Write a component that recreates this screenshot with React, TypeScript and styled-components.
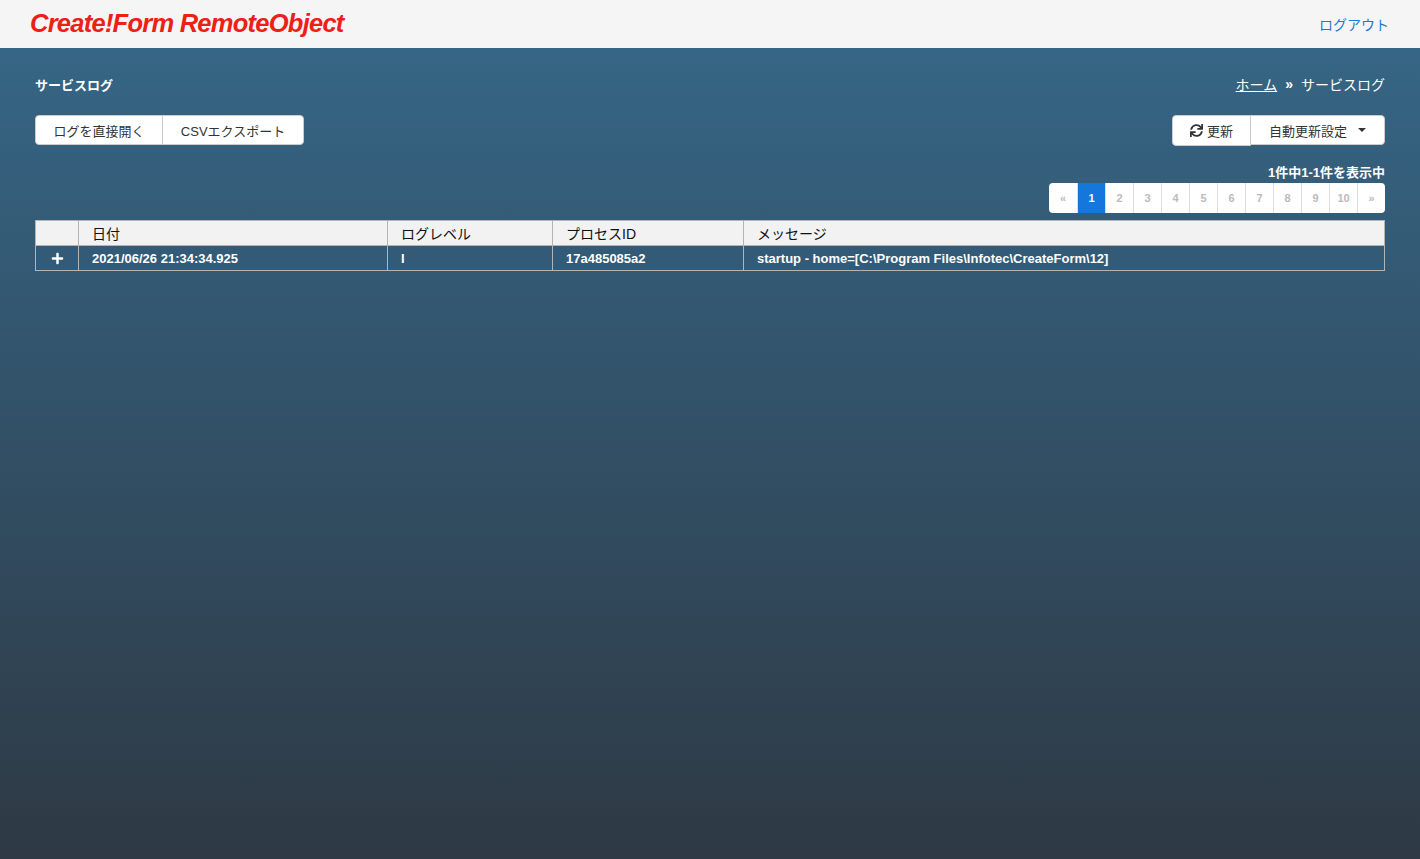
import { FaPlus, FaSync } from 'react-icons/fa'
import styled, { createGlobalStyle } from 'styled-components'

const GlobalStyle = createGlobalStyle`
  html, body {
    margin: 0;
    height: 100%;
  }
  body {
    font-family: "Liberation Sans", "Noto Sans CJK JP", sans-serif;
    font-size: 13px;
    color: #fff;
  }
`

const Page = styled.div`
  display: flex;
  flex-direction: column;
  min-height: 859px;
  background: linear-gradient(to bottom, #366889 0%, #2e3944 100%);
`

const Header = styled.header`
  display: flex;
  align-items: center;
  justify-content: space-between;
  height: 48px;
  padding: 0 31px 0 30px;
  background: #f5f5f5;
`

const Logo = styled.div`
  margin-top: -3px;
  font-size: 25.5px;
  line-height: 30px;
  font-weight: 700;
  font-style: italic;
  letter-spacing: -0.75px;
  color: #ec2016;
`

const Logout = styled.a`
  font-size: 14px;
  color: #1a7ad9;
`

const Content = styled.main`
  display: flex;
  flex-direction: column;
  padding: 0 35px;
`

const TitleRow = styled.div`
  display: flex;
  align-items: center;
  justify-content: space-between;
  height: 20px;
  margin-top: 26px;
`

const Title = styled.h1`
  margin: 0;
  font-size: 13px;
  font-weight: 700;
`

const Breadcrumb = styled.div`
  display: flex;
  align-items: center;
  font-size: 14px;
`

const CrumbLink = styled.a`
  color: #fff;
  text-decoration: underline;
`

const CrumbSeparator = styled.span`
  margin: 0 8px;
  font-weight: 700;
`

const Toolbar = styled.div`
  display: flex;
  align-items: flex-start;
  justify-content: space-between;
  margin-top: 21px;
`

const ButtonGroup = styled.div`
  display: flex;
`

const Button = styled.button<{ $width: number; $tall?: boolean }>`
  display: flex;
  align-items: center;
  justify-content: center;
  gap: 4px;
  width: ${({ $width }) => $width}px;
  height: ${({ $tall }) => ($tall ? 31 : 30)}px;
  padding: 0;
  margin-left: -1px;
  border: 1px solid #ccc;
  background: #fff;
  color: #333;
  font-family: inherit;
  font-size: 13px;

  &:first-child {
    margin-left: 0;
    border-radius: 4px 0 0 4px;
  }
  &:last-child {
    border-radius: 0 4px 4px 0;
  }
`

const Caret = styled.span`
  margin-left: 7px;
  border-top: 4px solid #333;
  border-left: 4px solid transparent;
  border-right: 4px solid transparent;
`

const PagerArea = styled.div`
  display: flex;
  flex-direction: column;
  align-items: flex-end;
  margin-top: 17px;
`

const Count = styled.div`
  height: 20px;
  font-size: 13px;
  font-weight: 700;
  line-height: 19px;
`

const Pager = styled.div`
  display: flex;
  height: 30px;
  border-radius: 4px;
  overflow: hidden;
`

const PageItem = styled.span<{ $active?: boolean }>`
  display: flex;
  align-items: center;
  justify-content: center;
  width: 28px;
  box-sizing: border-box;
  border-left: 1px solid #ddd;
  background: ${({ $active }) => ($active ? '#1577dc' : '#fff')};
  color: ${({ $active }) => ($active ? '#fff' : '#bbb')};
  font-size: 11px;
  font-weight: 700;

  &:first-child {
    border-left: 0;
  }
`

const Table = styled.table`
  width: 1350px;
  margin-top: 7px;
  border-collapse: collapse;
  table-layout: fixed;
`

const HeadCell = styled.th`
  height: 25px;
  box-sizing: border-box;
  padding: 0 13px;
  border: 1px solid #b4b4b4;
  background: #f2f2f2;
  color: #111;
  font-size: 14px;
  font-weight: 400;
  text-align: left;
`

const Cell = styled.td<{ $center?: boolean }>`
  height: 25px;
  box-sizing: border-box;
  padding: 0 13px;
  border: 1px solid #b4b4b4;
  font-size: 13px;
  font-weight: 700;
  background: #335a76;
  text-align: ${({ $center }) => ($center ? 'center' : 'left')};
`

const PlusIcon = styled(FaPlus)`
  display: block;
  margin: 0 auto;
  font-size: 13px;
`

const pages = ['«', '1', '2', '3', '4', '5', '6', '7', '8', '9', '10', '»']

export default function App() {
  return (
    <Page>
      <GlobalStyle />
      <Header>
        <Logo>Create!Form RemoteObject</Logo>
        <Logout>ログアウト</Logout>
      </Header>
      <Content>
        <TitleRow>
          <Title>サービスログ</Title>
          <Breadcrumb>
            <CrumbLink>ホーム</CrumbLink>
            <CrumbSeparator>»</CrumbSeparator>
            サービスログ
          </Breadcrumb>
        </TitleRow>
        <Toolbar>
          <ButtonGroup>
            <Button $width={128}>ログを直接開く</Button>
            <Button $width={142}>CSVエクスポート</Button>
          </ButtonGroup>
          <ButtonGroup>
            <Button $width={79} $tall>
              <FaSync size={13} />
              更新
            </Button>
            <Button $width={135}>
              自動更新設定
              <Caret />
            </Button>
          </ButtonGroup>
        </Toolbar>
        <PagerArea>
          <Count>1件中1-1件を表示中</Count>
          <Pager>
            {pages.map(page => (
              <PageItem key={page} $active={page === '1'}>
                {page}
              </PageItem>
            ))}
          </Pager>
        </PagerArea>
        <Table>
          <colgroup>
            <col width={43} />
            <col width={309} />
            <col width={165} />
            <col width={191} />
            <col />
          </colgroup>
          <thead>
            <tr>
              <HeadCell />
              <HeadCell>日付</HeadCell>
              <HeadCell>ログレベル</HeadCell>
              <HeadCell>プロセスID</HeadCell>
              <HeadCell>メッセージ</HeadCell>
            </tr>
          </thead>
          <tbody>
            <tr>
              <Cell $center>
                <PlusIcon />
              </Cell>
              <Cell>2021/06/26 21:34:34.925</Cell>
              <Cell>I</Cell>
              <Cell>17a485085a2</Cell>
              <Cell>startup - home=[C:\Program Files\Infotec\CreateForm\12]</Cell>
            </tr>
          </tbody>
        </Table>
      </Content>
    </Page>
  )
}
